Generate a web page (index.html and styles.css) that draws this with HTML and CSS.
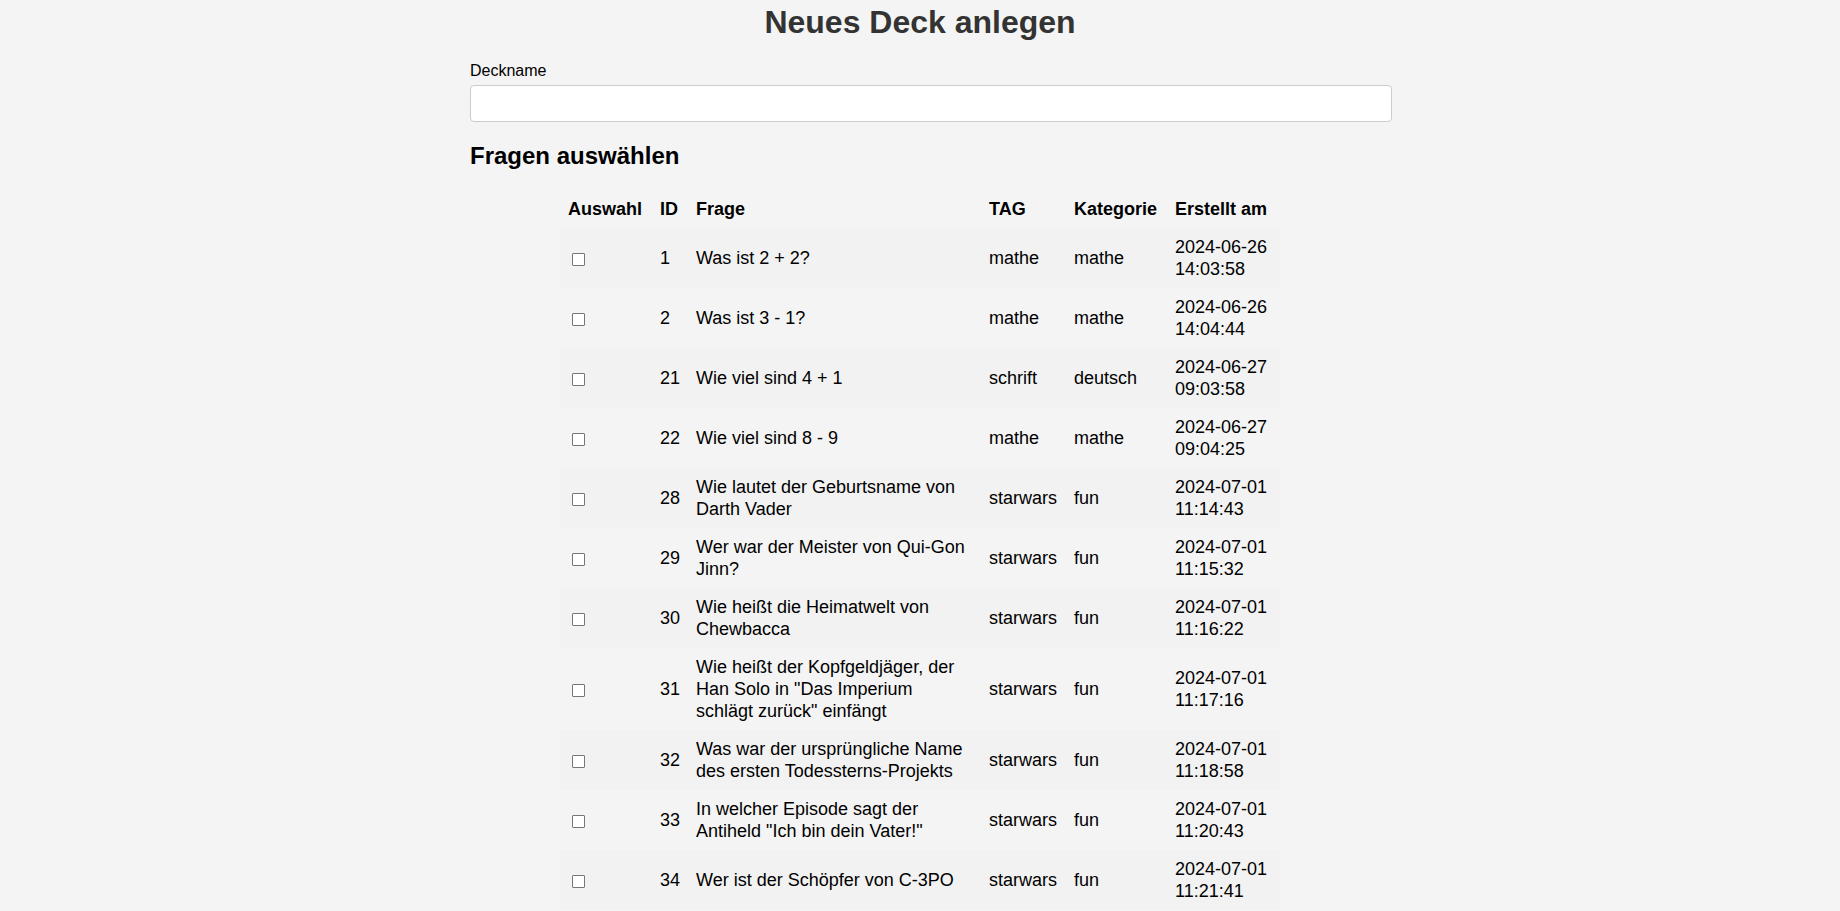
FILE: index.html
```html
<!DOCTYPE html>
<html lang="de">
<head>
<meta charset="utf-8">
<title>Neues Deck anlegen</title>
<link rel="stylesheet" href="styles.css">
</head>
<body>
<div class="container">
  <h1 class="title">Neues Deck anlegen</h1>
  <form class="deck-form">
    <label class="field-label" for="deckname">Deckname</label>
    <input class="text-input" type="text" id="deckname" name="deckname">
    <h2 class="section-title">Fragen auswählen</h2>
    <table class="questions">
      <colgroup>
        <col class="col-select">
        <col class="col-id">
        <col class="col-question">
        <col class="col-tag">
        <col class="col-category">
        <col class="col-created">
      </colgroup>
      <tr>
        <th>Auswahl</th><th>ID</th><th>Frage</th><th>TAG</th><th>Kategorie</th><th>Erstellt am</th>
      </tr>
      <tr><td><input class="pick" type="checkbox"></td><td>1</td><td>Was ist 2 + 2?</td><td>mathe</td><td>mathe</td><td>2024-06-26 14:03:58</td></tr>
      <tr><td><input class="pick" type="checkbox"></td><td>2</td><td>Was ist 3 - 1?</td><td>mathe</td><td>mathe</td><td>2024-06-26 14:04:44</td></tr>
      <tr><td><input class="pick" type="checkbox"></td><td>21</td><td>Wie viel sind 4 + 1</td><td>schrift</td><td>deutsch</td><td>2024-06-27 09:03:58</td></tr>
      <tr><td><input class="pick" type="checkbox"></td><td>22</td><td>Wie viel sind 8 - 9</td><td>mathe</td><td>mathe</td><td>2024-06-27 09:04:25</td></tr>
      <tr><td><input class="pick" type="checkbox"></td><td>28</td><td>Wie lautet der Geburtsname von Darth Vader</td><td>starwars</td><td>fun</td><td>2024-07-01 11:14:43</td></tr>
      <tr><td><input class="pick" type="checkbox"></td><td>29</td><td>Wer war der Meister von Qui-Gon Jinn?</td><td>starwars</td><td>fun</td><td>2024-07-01 11:15:32</td></tr>
      <tr><td><input class="pick" type="checkbox"></td><td>30</td><td>Wie heißt die Heimatwelt von Chewbacca</td><td>starwars</td><td>fun</td><td>2024-07-01 11:16:22</td></tr>
      <tr><td><input class="pick" type="checkbox"></td><td>31</td><td>Wie heißt der Kopfgeldjäger, der Han Solo in "Das Imperium schlägt zurück" einfängt</td><td>starwars</td><td>fun</td><td>2024-07-01 11:17:16</td></tr>
      <tr><td><input class="pick" type="checkbox"></td><td>32</td><td>Was war der ursprüngliche Name des ersten Todessterns-Projekts</td><td>starwars</td><td>fun</td><td>2024-07-01 11:18:58</td></tr>
      <tr><td><input class="pick" type="checkbox"></td><td>33</td><td>In welcher Episode sagt der Antiheld "Ich bin dein Vater!"</td><td>starwars</td><td>fun</td><td>2024-07-01 11:20:43</td></tr>
      <tr><td><input class="pick" type="checkbox"></td><td>34</td><td>Wer ist der Schöpfer von C-3PO</td><td>starwars</td><td>fun</td><td>2024-07-01 11:21:41</td></tr>
    </table>
  </form>
</div>
</body>
</html>
```

FILE: styles.css
```css
html, body {
  margin: 0;
  padding: 0;
}

body {
  font-family: "Liberation Sans", Arial, sans-serif;
  background-color: #f4f4f4;
  color: #000;
}

.container {
  max-width: 900px;
  margin: 0 auto;
  padding-top: 4px;
}

.title {
  font-size: 32px;
  font-weight: bold;
  color: #333;
  text-align: center;
  margin: 0 0 21px;
}

.field-label {
  display: block;
  font-size: 16px;
  margin-bottom: 5px;
}

.text-input {
  display: block;
  width: 100%;
  padding: 10px;
  border: 1px solid #ccc;
  border-radius: 4px;
  background: #fff;
  font-family: "Liberation Sans", Arial, sans-serif;
  font-size: 13px;
  margin: 0;
}

.section-title {
  font-size: 24px;
  font-weight: bold;
  margin: 20px 0 20px;
}

.questions {
  width: 720px;
  margin: 0 auto;
  border-collapse: collapse;
  table-layout: fixed;
  font-size: 18px;
  line-height: 22px;
}

.col-select { width: 92px; }
.col-id { width: 36px; }
.col-question { width: 293px; }
.col-tag { width: 85px; }
.col-category { width: 101px; }
.col-created { width: 113px; }

.questions th,
.questions td {
  padding: 8px;
  text-align: left;
}

.questions th {
  font-weight: bold;
}

.questions tr:nth-child(even) {
  background-color: #f2f2f2;
}

.pick {
  -webkit-appearance: none;
  appearance: none;
  box-sizing: border-box;
  width: 13px;
  height: 13px;
  margin: 3px 3px 3px 4px;
  border: 1px solid #767676;
  border-radius: 1px;
  background: #fff;
  vertical-align: middle;
}
```
